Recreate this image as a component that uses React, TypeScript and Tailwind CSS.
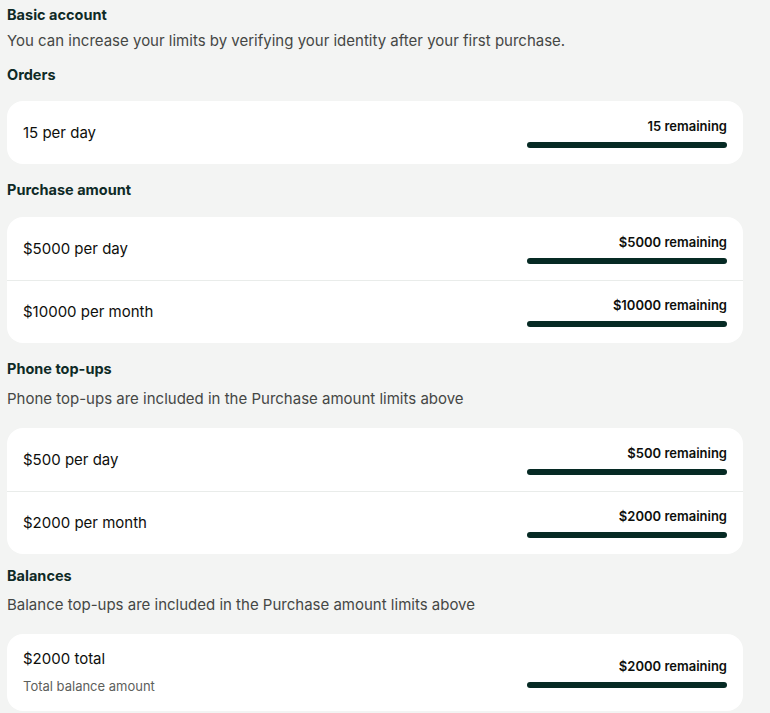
import React from 'react'

interface Limit {
  label: string
  remaining: string
  note?: string
}

interface Section {
  title: string
  description?: string
  limits: Limit[]
}

const sections: Section[] = [
  {
    title: 'Orders',
    limits: [{ label: '15 per day', remaining: '15 remaining' }]
  },
  {
    title: 'Purchase amount',
    limits: [
      { label: '$5000 per day', remaining: '$5000 remaining' },
      { label: '$10000 per month', remaining: '$10000 remaining' }
    ]
  },
  {
    title: 'Phone top-ups',
    description: 'Phone top-ups are included in the Purchase amount limits above',
    limits: [
      { label: '$500 per day', remaining: '$500 remaining' },
      { label: '$2000 per month', remaining: '$2000 remaining' }
    ]
  },
  {
    title: 'Balances',
    description: 'Balance top-ups are included in the Purchase amount limits above',
    limits: [{ label: '$2000 total', remaining: '$2000 remaining', note: 'Total balance amount' }]
  }
]

// spacing measured off the design, it isn't quite uniform
const sectionGap = ['mt-[14px]', 'mt-[16px]', 'mt-[16px]', 'mt-[12px]']
const descGap = ['', '', 'mt-[10px]', 'mt-[9px]']
const cardGap = ['mt-[16px]', 'mt-[17px]', 'mt-[19px]', 'mt-[19px]']

const LimitRow: React.FC<{ limit: Limit; first: boolean }> = ({ limit, first }) => (
  <div
    className={`flex items-center justify-between px-4 ${limit.note ? 'h-[77px]' : 'h-[63px]'} ${
      first ? '' : 'border-t border-[#e9ecea]'
    }`}
  >
    <div className="flex flex-col">
      <span className="text-[15px] leading-5 text-[#0e0f0c]">{limit.label}</span>
      {limit.note && <span className="mt-[7px] text-[13px] leading-5 text-[#5d605c]">{limit.note}</span>}
    </div>
    <div className="flex w-[200px] flex-col items-end">
      <span className="text-[13px] font-semibold leading-4 text-[#0e0f0c]">{limit.remaining}</span>
      <div className="mt-[8px] h-[6px] w-full rounded-full bg-[#062a24]" />
    </div>
  </div>
)

export default function App() {
  return (
    <div
      className="min-h-[713px] w-[770px] bg-[#f3f4f3] pl-[7px] pr-[27px] pt-[5px]"
      style={{ fontFamily: 'Inter, "Liberation Sans", sans-serif' }}
    >
      <h1 className="text-[14.5px] font-bold leading-5 text-[#0e2a26]">Basic account</h1>
      <p className="mt-[6px] text-[15px] leading-5 text-[#454745]">
        You can increase your limits by verifying your identity after your first purchase.
      </p>

      {sections.map((section, i) => (
        <div key={section.title} className={sectionGap[i]}>
          <h2 className="text-[14.5px] font-bold leading-5 text-[#0e2a26]">{section.title}</h2>
          {section.description && (
            <p className={`${descGap[i]} text-[15px] leading-5 text-[#454745]`}>{section.description}</p>
          )}
          <div className={`${cardGap[i]} overflow-hidden rounded-2xl bg-white`}>
            {section.limits.map((limit, j) => (
              <LimitRow key={limit.label} limit={limit} first={j === 0} />
            ))}
          </div>
        </div>
      ))}
    </div>
  )
}
